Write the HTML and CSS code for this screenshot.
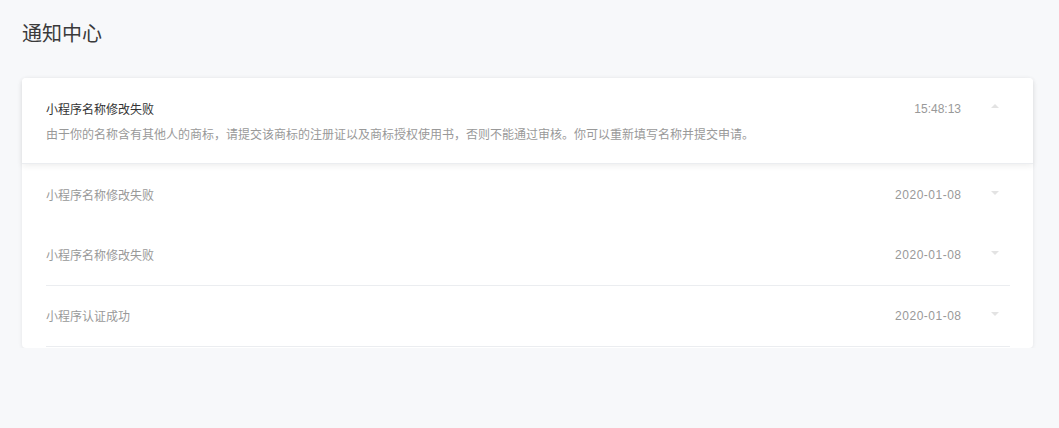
FILE: index.html
```html
<!DOCTYPE html>
<html lang="zh-CN">
<head>
<meta charset="utf-8">
<title>通知中心</title>
<link rel="stylesheet" href="styles.css">
</head>
<body>
<div class="page">
  <h1 class="page-title">通知中心</h1>
  <div class="card">
    <div class="item item-open">
      <div class="item-head">
        <span class="item-title">小程序名称修改失败</span>
        <span class="item-time">15:48:13</span>
        <span class="arrow arrow-up"></span>
      </div>
      <div class="item-desc">由于你的名称含有其他人的商标，请提交该商标的注册证以及商标授权使用书，否则不能通过审核。你可以重新填写名称并提交申请。</div>
    </div>
    <div class="row row-first">
      <span class="item-title">小程序名称修改失败</span>
      <span class="item-time item-date">2020-01-08</span>
      <span class="arrow arrow-down"></span>
    </div>
    <div class="row">
      <span class="item-title">小程序名称修改失败</span>
      <span class="item-time item-date">2020-01-08</span>
      <span class="arrow arrow-down"></span>
    </div>
    <div class="row">
      <span class="item-title">小程序认证成功</span>
      <span class="item-time item-date">2020-01-08</span>
      <span class="arrow arrow-down"></span>
    </div>
  </div>
</div>
</body>
</html>
```

FILE: styles.css
```css
html, body {
  margin: 0;
  padding: 0;
  background: #f7f8fa;
}
body {
  font-family: "Noto Sans CJK SC", "Noto Sans", sans-serif;
  color: #333;
}
.page {
  padding: 19px 26px 0 22px;
}
.page-title {
  margin: 0 0 31px;
  font-size: 20px;
  line-height: 28px;
  font-weight: 400;
  color: #3a3a3a;
}
.card {
  background: #fff;
  border-radius: 4px;
  box-shadow: 0 1px 4px rgba(0, 0, 0, 0.08);
  padding-bottom: 1px;
}
.item-open {
  position: relative;
  z-index: 1;
  height: 86px;
  box-sizing: border-box;
  padding: 22px 34px 0 24px;
  background: #fff;
  border-radius: 4px 4px 0 0;
  box-shadow: 0 2px 6px rgba(0, 0, 0, 0.07);
  border-bottom: 1px solid #ebedf0;
}
.item-head {
  display: flex;
  align-items: center;
  height: 18px;
}
.item-title {
  flex: 1;
  font-size: 12px;
  line-height: 18px;
  color: #999;
}
.item-open .item-title {
  color: #333;
}
.item-time {
  font-family: "Liberation Sans", "Noto Sans CJK SC", sans-serif;
  font-size: 12px;
  line-height: 18px;
  color: #999;
  margin-right: 30px;
}
.item-date {
  letter-spacing: 0.5px;
  margin-right: 29.5px;
}
.item-desc {
  margin-top: 7px;
  font-size: 12px;
  line-height: 18px;
  color: #999;
}
.row {
  display: flex;
  align-items: center;
  height: 60px;
  margin: 0 23px 0 24px;
  padding-right: 11px;
  border-bottom: 1px solid #ebedf0;
}
.row-first {
  height: 61px;
  border-bottom: none;
}
.arrow {
  width: 0;
  height: 0;
  border-left: 4px solid transparent;
  border-right: 4px solid transparent;
}
.arrow-up {
  border-bottom: 4px solid #e3e3e3;
  margin-top: -6px;
}
.arrow-down {
  border-top: 4px solid #e3e3e3;
  margin-top: -4px;
}
```
